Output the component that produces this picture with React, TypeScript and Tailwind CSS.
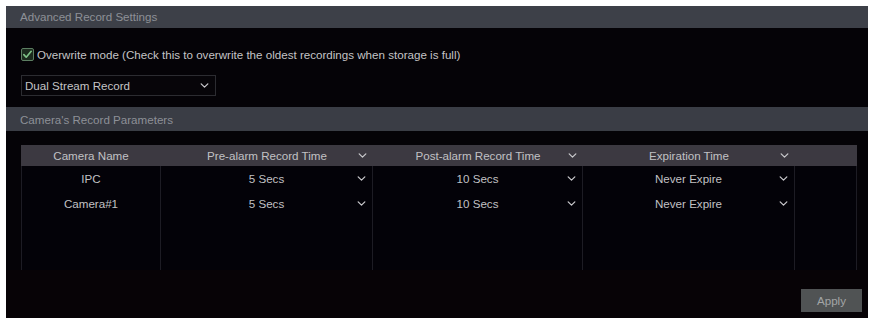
import React from "react";

const Chevron = ({ className = "" }: { className?: string }) => (
  <svg viewBox="0 0 10 6" className={`h-[5px] w-[9px] ${className}`} fill="none">
    <path d="M1 1l4 4 4-4" stroke="#c9c9cc" strokeWidth="1.5" strokeLinecap="round" strokeLinejoin="round" />
  </svg>
);

const columns = [
  { label: "Camera Name", width: "w-[140px]", select: false },
  { label: "Pre-alarm Record Time", width: "w-[212px]", select: true },
  { label: "Post-alarm Record Time", width: "w-[210px]", select: true },
  { label: "Expiration Time", width: "w-[212px]", select: true },
];

const rows = [
  ["IPC", "5 Secs", "10 Secs", "Never Expire"],
  ["Camera#1", "5 Secs", "10 Secs", "Never Expire"],
];

const Cell = ({ text, select, width }: { text: string; select: boolean; width: string }) => (
  <div className={`relative flex h-[25px] items-center justify-center ${width}`}>
    <span>{text}</span>
    {select && <Chevron className="absolute right-[6px] top-[10px]" />}
  </div>
);

export default function App() {
  return (
    <div className="h-[323px] w-[871px] bg-white pl-[6px] pt-[6px] font-['Liberation_Sans',Arial,sans-serif] text-[11.6px]">
      <div className="flex h-[312px] w-[862px] flex-col bg-[#050307]">
        <div className="flex h-[22px] items-center bg-[#3d4048] px-[14px] text-[#8d9097]">
          Advanced Record Settings
        </div>
        <div className="flex flex-col gap-[12px] px-[15px] pt-[18px] pb-[11px]">
          <label className="flex items-center gap-[3px] text-[#c4c4c6]">
            <span className="flex h-[13px] w-[13px] items-center justify-center rounded-[2px] border border-[#5d7e62] bg-[#1b2a1d]">
              <svg viewBox="0 0 12 12" className="h-[11px] w-[11px]" fill="none">
                <path d="M2 6.2l2.6 2.8L10 2.5" stroke="#7fc287" strokeWidth="1.8" strokeLinecap="round" strokeLinejoin="round" />
              </svg>
            </span>
            Overwrite mode (Check this to overwrite the oldest recordings when storage is full)
          </label>
          <div className="flex h-[21px] w-[195px] items-center justify-between border border-[#2c2c31] bg-[#070509] px-[3px] text-[#c4c4c6]">
            <span>Dual Stream Record</span>
            <Chevron className="mr-[3px]" />
          </div>
        </div>
        <div className="flex h-[24px] items-center bg-[#3a3d45] px-[14px] text-[#8d9097]">
          Camera's Record Parameters
        </div>
        <div className="flex flex-1 flex-col">
          <div className="mx-[15px] mt-[14px] flex h-[125px] w-[836px] flex-col text-[#c1c1c4]">
            <div className="flex h-[21px] items-center bg-[#3c3941]">
              {columns.map((c) => (
                <div key={c.label} className={`relative flex h-full items-center justify-center ${c.width}`}>
                  <span>{c.label}</span>
                  {c.select && <Chevron className="absolute right-[6px] top-[8px]" />}
                </div>
              ))}
            </div>
            <div className="flex flex-1 bg-[#030208]">
              {columns.map((c, ci) => (
                <div key={c.label} className={`flex flex-col border-r border-[#1d1c24] ${c.width} ${ci === 0 ? "border-l" : ""}`}>
                  {rows.map((r, ri) => (
                    <Cell key={ri} text={r[ci]} select={c.select} width="w-full" />
                  ))}
                </div>
              ))}
              <div className="flex-1 border-r border-[#1d1c24]" />
            </div>
          </div>
          <div className="flex flex-1 items-end justify-end bg-[#070306] pb-[6px] pr-[6px]">
            <button className="flex h-[23px] w-[61px] items-center justify-center bg-[#505354] text-[#a3a5a6]">
              Apply
            </button>
          </div>
        </div>
      </div>
    </div>
  );
}
